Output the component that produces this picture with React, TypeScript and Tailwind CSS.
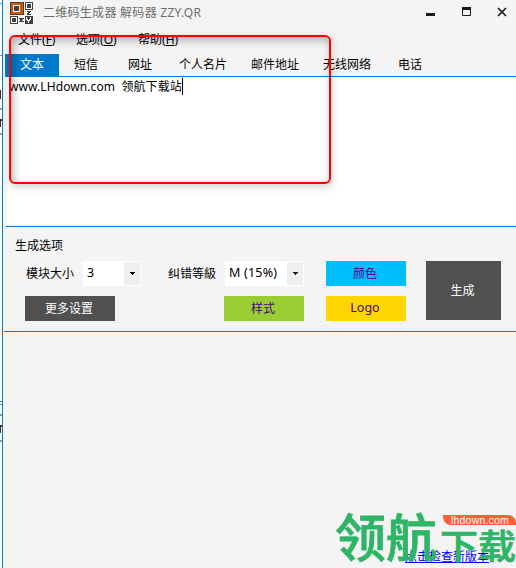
import { clsx } from 'clsx';

const menus = [
    { label: '文件', hotkey: 'F', width: 'w-[58px]' },
    { label: '选项', hotkey: 'O', width: 'w-[62px]' },
    { label: '帮助', hotkey: 'H', width: 'w-[62px]' },
];

const tabs = [
    { label: '文本', width: 'w-[54px]', active: true },
    { label: '短信', width: 'w-[54px]' },
    { label: '网址', width: 'w-[54px]' },
    { label: '个人名片', width: 'w-[72px]' },
    { label: '邮件地址', width: 'w-[72px]' },
    { label: '无线网络', width: 'w-[72px]' },
    { label: '电话', width: 'w-[54px]' },
];

function AppIcon() {
    return (
        <svg width="23" height="22" viewBox="0 0 22 22" preserveAspectRatio="none" shapeRendering="crispEdges" className="shrink-0">
            <rect width="13" height="13" fill="#404040" />
            <rect x="1" y="1" width="11" height="11" fill="#d45500" />
            <rect x="3" y="3" width="7" height="7" fill="#fff" />
            <rect x="4" y="4" width="5" height="5" fill="#404040" />
            <path d="M14.5.5h7v7h-7zM.5 14.5h7v7h-7z" fill="#fff" stroke="#404040" />
            <path d="M16 2h4v4h-4zM2 16h4v4H2z" fill="#404040" />
            <path d="M16 9.5h4M19 10.5h-1.500M18 11.500h-1.500M16 12.500h4M9 16.500h4M12 17.500h-2M11 18.500h-1.500M9 19.500h4" stroke="#404040" fill="none" />
            <rect x="14" y="14" width="8" height="8" fill="#404040" />
            <path d="M16 15v2h1v1h2v-1h1v-2M18 18v3" stroke="#fff" fill="none" />
        </svg>
    );
}

function Select({ value, className }: { value: string; className: string }) {
    return (
        <div className={clsx('flex h-[25px] items-center border border-white bg-white', className)}>
            <span className="flex-1 pl-[3px] text-[12.500px] tracking-[0.2px] whitespace-nowrap">{value}</span>
            <span className="flex h-[23px] w-4 items-center justify-center bg-[#efefef]">
                <svg width="5" height="3" shapeRendering="crispEdges">
                    <path d="M0 0h5v1H4v1H3v1H2V2H1V1H0z" />
                </svg>
            </span>
        </div>
    );
}

export default function App() {
    return (
        <div className="relative flex h-[568px] w-[516px] overflow-hidden bg-white font-['Noto_Sans','Noto_Sans_CJK_SC',sans-serif] text-xs text-black">
            {/* Sliver of the window behind */}
            <svg width="2" height="568" shapeRendering="crispEdges" className="shrink-0">
                <path d="M0 3.500h2M0 55.500h2" stroke="#64a7d8" />
                <path d="M0 109h2M0 134h2M0 415h2M0 441h2" stroke="#999" strokeWidth="2" />
                <path d="M0 90h1v9H0zM0 119h2v2H0zM0 121h1v6H0zM0 425h2v2H0zM0 427h1v6H0z" fill="#512510" />
                <path d="M0 401.500h2M0 404.500h2" stroke="#338fc9" />
            </svg>

            <div className="flex min-w-0 flex-1 flex-col border-l border-[#007acc] bg-[#f4f4f4]">
                <header className="flex h-[30px] shrink-0 items-start pt-0.5 pl-[7px]">
                    <AppIcon />
                    <h1 className="ml-[10px] pt-px text-xs leading-5 tracking-[0.28px] text-[#6d6d6d]">二维码生成器 解码器 ZZY.QR</h1>
                    <svg width="88" height="24" fill="none" stroke="#1b1b1b" className="mr-[7px] ml-auto shrink-0">
                        <path d="M5 12.500h9" strokeWidth="3" />
                        <path d="M41.500 5.500h8v8h-8z" />
                        <path d="M41 6.500h9" strokeWidth="3" />
                        <path d="M77 6l8 8M85 6l-8 8" strokeWidth="1.700" />
                    </svg>
                </header>

                <nav className="flex h-6 shrink-0 pl-[15px]">
                    {menus.map((menu) => (
                        <span key={menu.label} className={clsx('leading-5 whitespace-nowrap', menu.width)}>
                            {menu.label}(<u>{menu.hotkey}</u>)
                        </span>
                    ))}
                </nav>

                <div className="ml-0.5 flex h-[23px] shrink-0 border-b border-[#007acc]">
                    {tabs.map((tab) => (
                        <span
                            key={tab.label}
                            className={clsx(
                                'text-center leading-[22px]',
                                tab.width,
                                tab.active && 'bg-[#007acc] text-white',
                            )}
                        >
                            {tab.label}
                        </span>
                    ))}
                </div>

                <div className="ml-1 h-[147px] shrink-0 bg-white pt-px pl-0.5">
                    <span className="inline-block border-r border-black text-xs leading-[17px] tracking-[0.08px] whitespace-pre">www.LHdown.com  领航下载站</span>
                </div>

                <section className="mt-0.5 ml-[3px] h-[105px] shrink-0 border-t border-[#007acc] pt-[9px] pl-[9px]">
                    <h2 className="text-xs leading-5">生成选项</h2>
                    <div className="mt-[5px] ml-[10px] flex">
                        <div className="w-[301px]">
                            <div className="flex items-center">
                                <span className="w-[58px] pl-px">模块大小</span>
                                <Select value="3" className="w-[58px]" />
                                <span className="ml-[26px] w-[58px] pl-px">纠错等級</span>
                                <Select value="M (15%)" className="w-[79px]" />
                            </div>
                            <div className="mt-2.5 flex">
                                <button className="h-[25px] w-[90px] bg-[#505050] pr-0.5 text-white">更多设置</button>
                                <button className="ml-[109px] h-[25px] w-20 bg-[#9acd32] pr-0.5 text-[#4b0082]">样式</button>
                            </div>
                        </div>
                        <div className="flex w-20 flex-col gap-2.5">
                            <button className="h-[25px] bg-[#00bfff] pr-0.5 text-[#4b0082]">颜色</button>
                            <button className="h-[25px] bg-[#ffd700] pr-0.5 text-[12.500px] text-[#4b0082]">Logo</button>
                        </div>
                        <button className="ml-5 h-[59px] w-[75px] bg-[#505050] pr-0.5 text-white">生成</button>
                    </div>
                </section>

                <main className="ml-px flex-1 border-t border-[#007acc]" />
            </div>

            <a className="absolute top-[548px] left-[405px] text-xs leading-[18px] whitespace-nowrap text-[#0000ff] underline">点击检查新版本</a>

            {/* Site watermark, the last two characters sit lower to clear the domain badge */}
            <div className="absolute top-[509px] left-[335px] flex items-start font-medium whitespace-nowrap text-[#2eb566] [-webkit-text-stroke:0.8px_#2eb566]">
                <span className="w-[105px] text-[51px] leading-[56px]">领航</span>
                <span className="mt-[19px] flex text-[38px] leading-[36px]">
                    <span className="w-[38px] scale-y-90">下</span>
                    <span className="w-[37px] scale-y-90">载</span>
                </span>
            </div>
            <div className="absolute top-[515px] left-[443px] h-[10px] w-[73px] rounded-tr-lg rounded-bl-lg bg-[#ff5e38] pl-2 font-['Liberation_Sans',sans-serif] text-[10.500px] leading-[10px] tracking-[0.2px] text-white">lhdown.com</div>

            {/* Highlight frame */}
            <div className="absolute top-[35px] left-[9px] h-[149px] w-[322px] rounded-md border-2 border-[#f00] shadow-[1px_3px_8px_rgba(0,0,0,0.18),inset_2px_3px_8px_rgba(0,0,0,0.3)]" />
        </div>
    );
}
